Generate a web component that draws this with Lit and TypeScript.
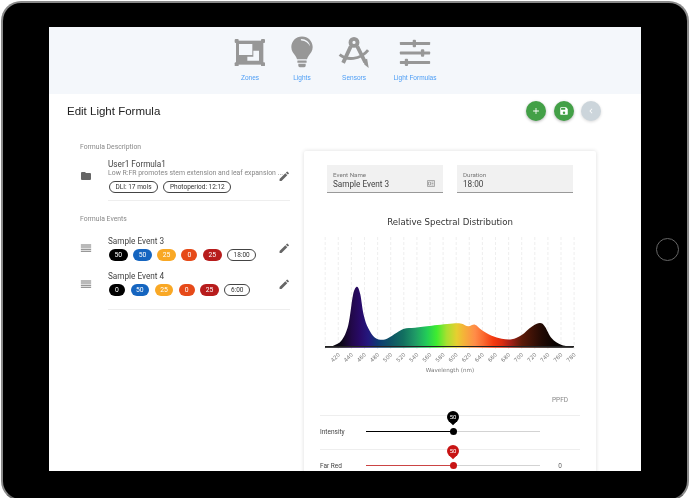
import { LitElement, html, css, svg } from "lit";
import { customElement } from "lit/decorators.js";

const PTS: [number, number][] = [
  [30,336],[55,332],[80,316],[100,270],[114,180],[126,155],[136,178],[146,240],[160,280],[180,308],[205,314],[225,306],[265,282],[300,278],[350,272],[420,265],[440,266],[460,274],[480,269],[500,285],[530,302],[560,311],[590,313],[620,300],[650,275],[675,264],[690,275],[710,310],[740,330],[776,336]
];
const px = (z: number) => 315 + z / 3;
const py = (z: number) => 235 + z / 3;
function areaPath(): string {
  const p = PTS.map(([x, y]) => [px(x), py(y)]);
  let d = `M${p[0][0]} ${py(338)} L${p[0][0]} ${p[0][1]}`;
  for (let i = 0; i < p.length - 1; i++) {
    const a = p[Math.max(0, i - 1)], b = p[i], c = p[i + 1], e = p[Math.min(p.length - 1, i + 2)];
    const c1 = [b[0] + (c[0] - a[0]) / 6, b[1] + (c[1] - a[1]) / 6];
    const c2 = [c[0] - (e[0] - b[0]) / 6, c[1] - (e[1] - b[1]) / 6];
    d += ` C${c1[0].toFixed(1)} ${c1[1].toFixed(1)} ${c2[0].toFixed(1)} ${c2[1].toFixed(1)} ${c[0].toFixed(1)} ${c[1].toFixed(1)}`;
  }
  return d + ` L${p[p.length - 1][0]} ${py(338)} Z`;
}
const STOPS: [number, string][] = [
  [30,"#000"],[80,"#0c0618"],[110,"#22084a"],[135,"#280a68"],[160,"#24187e"],[190,"#0d3a72"],[225,"#0e5266"],[265,"#127060"],[300,"#1f9a66"],[335,"#22cc58"],[365,"#3fec30"],[395,"#a8e030"],[425,"#e6cf30"],[445,"#f4b438"],[480,"#ff8c48"],[505,"#fb6a30"],[535,"#f43a10"],[560,"#dd2c10"],[585,"#a82018"],[620,"#5c1a08"],[680,"#220a04"],[720,"#0a0301"],[776,"#000"]
];

const pencil = html`<svg class="pen" viewBox="0 0 24 24"><path d="M3 17.25V21h3.75L17.81 9.94l-3.75-3.75L3 17.25zM20.71 7.04a1 1 0 0 0 0-1.41l-2.34-2.34a1 1 0 0 0-1.41 0l-1.83 1.83 3.75 3.75 1.83-1.83z"/></svg>`;
const bars = html`<svg class="lead" viewBox="0 0 14 14"><path d="M1 2.800h12v1.200H1zM1 5.300h12v1.200H1zM1 7.800h12v1.200H1zM1 10.300h12v1.200H1z"/></svg>`;

interface Chip { t: string; c: string }
const BLACK = "#000", BLUE = "#1565c0", ORANGE = "#f9a825", RED = "#e64a19", DARK = "#b71c1c";
const events: { name: string; chips: Chip[]; time: string }[] = [
  { name: "Sample Event 3", time: "18:00", chips: [{t:"50",c:BLACK},{t:"50",c:BLUE},{t:"25",c:ORANGE},{t:"0",c:RED},{t:"25",c:DARK}] },
  { name: "Sample Event 4", time: "6:00", chips: [{t:"0",c:BLACK},{t:"50",c:BLUE},{t:"25",c:ORANGE},{t:"0",c:RED},{t:"25",c:DARK}] },
];

@customElement("app-root")
export class AppRoot extends LitElement {
  static styles = css`
    :host { display: block; width: 690px; height: 498px; background: #fff; overflow: hidden; font-family: Roboto, "Liberation Sans", sans-serif; }
    .tablet { position: relative; box-sizing: border-box; width: 688px; height: 500px; margin: 1px 1px 0; background: #000; border: 2px solid #8a8a8a; border-bottom-color: #6a6a6a; border-radius: 20px; padding: 24px 46px 27px; filter: blur(.3px); }
    .home { position: absolute; left: 652.500px; top: 235px; width: 23px; height: 23px; box-sizing: border-box; border: 1px solid #666; border-radius: 50%; }
    .screen { width: 592px; height: 444px; background: #fff; overflow: hidden; display: flex; flex-direction: column; }
    .nav { flex: none; height: 67px; background: #f4f7fb; display: flex; padding-left: 175px; box-sizing: border-box; }
    .nav-item { display: flex; flex-direction: column; align-items: center; justify-content: flex-end; padding-bottom: 12px; box-sizing: border-box; height: 67px; }
    .ico { height: 32px; display: flex; align-items: center; margin-bottom: 6px; }
    .ico svg { display: block; }
    .nav-item span { font: 6.500px/8px "Liberation Sans", Arial, sans-serif; color: #4c9df5; white-space: nowrap; }
    .titlebar { flex: none; height: 34px; display: flex; align-items: center; padding: 0 40px 0 18px; }
    h1 { flex: 1; margin: 0; font: 400 11.500px/16px "Liberation Sans", Arial, sans-serif; color: #222; }
    .fabs { display: flex; gap: 7.500px; }
    .fab { width: 20px; height: 20px; border-radius: 50%; background: #43a047; display: flex; align-items: center; justify-content: center; box-shadow: 0 1px 3px rgba(0,0,0,.3); color: #fff; }
    .fab.off { background: #ccd5db; box-shadow: 0 1px 3px rgba(0,0,0,.15); }
    .fab svg { width: 10px; height: 10px; fill: #fff; }
    .body { flex: 1; display: flex; align-items: flex-start; padding-left: 31px; min-height: 0; }
    .left { width: 210px; flex: none; padding-top: 13.500px; color: #444; }
    .sec { font-size: 6.800px; line-height: 10px; color: #888; white-space: nowrap; }
    .row { display: flex; align-items: center; }
    .lead { flex: none; width: 12px; height: 12px; margin: 0 16px 0 0; fill: #777; }
    .lead.folder { fill: #666; }
    .main { flex: 1; min-width: 0; }
    .name { font-size: 8.200px; line-height: 10px; color: #444; white-space: nowrap; }
    .desc { font-size: 6.900px; line-height: 9px; color: #888; white-space: nowrap; }
    .chips { display: flex; gap: 5.500px; margin: 3px 0 0 1px; }
    .chip { box-sizing: border-box; height: 12px; border-radius: 6px; padding: 0 5.500px; font-size: 6.800px; line-height: 12px; color: #fff; min-width: 16px; text-align: center; white-space: nowrap; }
    .chip.line { background: #fff; color: #333; border: 1px solid #444; line-height: 10px; padding: 0 5.500px; font-size: 6.500px; }
    .pen { flex: none; width: 12.500px; height: 12.500px; fill: #666; margin: 0 0 0 auto; }
    .desc-row { height: 47.500px; margin-top: 1px; }
    .rule { height: 1px; background: #eee; margin-left: 28px; }
    .sec.events { margin-top: 13px; }
    .ev { height: 35.500px; }
    .ev.first { margin-top: 6.500px; }
    .rule.end { margin-top: 7px; }
    .card { width: 292px; flex: none; margin-left: 14px; margin-top: 23px; padding-top: 14px; background: #fff; box-shadow: 0 0 4px rgba(0,0,0,.14); border-radius: 2px; height: 400px; box-sizing: border-box; }
    .fields { display: flex; gap: 14px; padding-left: 23px; }
    .field { box-sizing: border-box; width: 116px; height: 28px; background: #f1f1f1; border-bottom: 1px solid #999; padding: 6px 6px 0; position: relative; }
    .field label { display: block; font-size: 6.200px; line-height: 8px; color: #777; }
    .field div { font-size: 8.200px; line-height: 11px; color: #444; }
    .field svg { position: absolute; right: 8px; top: 15px; width: 8px; height: 7px; }
    .ctitle { margin-top: 22px; text-align: center; font: 8.600px/14px "DejaVu Sans", sans-serif; color: #333; }
    .chart { display: block; margin: 8px 0 0 16px; }
    .ppfd { height: 38px; margin: 0 16px; display: grid; grid-template-columns: 46px 174px 40px; align-items: end; padding-bottom: 10px; box-sizing: border-box; font-size: 6.500px; line-height: 9px; color: #888; }
    .ppfd span { grid-column: 3; text-align: center; }
    .srow { height: 34px; margin: 0 16px; border-top: 1px solid #eee; box-sizing: border-box; display: grid; grid-template-columns: 46px 174px 40px; align-items: center; font-size: 6.500px; color: #444; padding-bottom: 2px; }
    .val { text-align: center; color: #666; }
    .track { position: relative; height: 1.500px; background: #d3d3d3; --c: #000; }
    .track i { display: block; height: 100%; width: 50%; background: var(--c); opacity: var(--o, 1); }
    .thumb { position: absolute; left: 50%; top: 50%; width: 7px; height: 7px; margin: -3.500px 0 0 -3.500px; border-radius: 50%; background: var(--c); }
    .pin { position: absolute; left: 50%; top: -20px; width: 12px; height: 12px; margin-left: -6px; border-radius: 50%; background: var(--c); color: #fff; font-size: 6px; line-height: 12px; text-align: center; }
    .pin::before { content: ""; position: absolute; left: 3px; top: 6.800px; width: 6px; height: 6px; background: var(--c); transform: rotate(45deg); }
    .pin b { font-weight: 400; position: relative; }
    .red { --c: #c81414; --o: .75; }
    text { font-family: "DejaVu Sans", sans-serif; }
  `;

  chart() {
    const grid = Array.from({ length: 20 }, (_, i) => 325.2 + i * 13.1);
    const labels = grid.slice(1).map((x, i) => ({ x, t: String(420 + i * 20) }));
    return html`<svg class="chart" width="260" height="140" viewBox="320 237 260 140">
      <defs><linearGradient id="spec" gradientUnits="userSpaceOnUse" x1="${px(30)}" x2="${px(776)}" y1="0" y2="0">
        ${STOPS.map(([z, c]) => svg`<stop offset="${(z - 30) / 746}" stop-color="${c}"/>`)}
      </linearGradient></defs>
      ${grid.map((x) => svg`<line x1="${x}" x2="${x}" y1="237" y2="349" stroke="#e8e8e8" stroke-width=".7" stroke-dasharray="3 2"/>`)}
      <path d="${areaPath()}" fill="url(#spec)"/>
      <rect x="325" y="346" width="249" height="1" fill="#222"/>
      ${labels.map((l) => svg`<text x="${l.x + 1}" y="354" font-size="5.500" fill="#777" text-anchor="end" dominant-baseline="middle" transform="rotate(-45 ${l.x + 1} 354)">${l.t}</text>`)}
      <text x="450" y="372" font-size="5.600" fill="#777" text-anchor="middle">Wavelength (nm)</text>
    </svg>`;
  }

  slider(label: string, val: string, cls: string) {
    return html`<div class="srow"><span>${label}</span>
      <div class="track ${cls}"><i></i><div class="thumb"></div><div class="pin"><b>50</b></div></div>
      <span class="val">${val}</span></div>`;
  }

  render() {
    return html`<div class="tablet">
      <div class="home"></div>
      <div class="screen">
        <div class="nav">
          <div class="nav-item" style="width:52px">
            <div class="ico"><svg width="32" height="28" viewBox="0 0 96 84">
              <g fill="#979797">
                <rect x="6" y="8" width="82" height="72"/>
                <rect x="2" y="3" width="12" height="12" rx="3"/><rect x="81" y="3" width="12" height="12" rx="3"/>
                <rect x="2" y="73" width="12" height="12" rx="3"/><rect x="81" y="73" width="12" height="12" rx="3"/>
              </g>
              <rect x="15" y="18" width="40" height="33" fill="#f4f7fb"/>
              <path fill="#f4f7fb" d="M58 38h17v30H40V56h18z"/>
            </svg></div>
            <span>Zones</span>
          </div>
          <div class="nav-item" style="width:52px">
            <div class="ico"><svg width="22" height="32" viewBox="0 0 69 100">
              <path fill="#979797" d="M34.500 1C15.500 1 1 16 1 34c0 12 7 20 12 27 3 4 5 8 6 12h31c1-4 3-8 6-12 5-7 12-15 12-27C68 16 53.500 1 34.500 1z"/>
              <path fill="#f4f7fb" d="M33 9c13 0 25 9 27 23-6-10-15-17-27-18-3-1-3-5 0-5z"/>
              <rect x="20" y="77" width="29" height="7" rx="1" fill="#979797"/>
              <path fill="#979797" d="M23 87h23v5a6 6 0 0 1-6 6H29a6 6 0 0 1-6-6z"/>
            </svg></div>
            <span>Lights</span>
          </div>
          <div class="nav-item" style="width:52px">
            <div class="ico"><svg width="32" height="32" viewBox="0 0 96 100">
              <g fill="none" stroke="#979797" stroke-width="12">
                <circle cx="48" cy="20" r="11"/>
                <path d="M38 32L14 84M58 32l25 50"/>
                <path d="M3 58C25 76 66 76 92 44" stroke-width="9"/>
              </g>
              <path fill="#979797" d="M76 76l13-5 5 29-13-10z"/>
            </svg></div>
            <span>Sensors</span>
          </div>
          <div class="nav-item" style="width:70px">
            <div class="ico"><svg width="32" height="27" viewBox="0 0 96 82">
              <g fill="#979797">
                <rect x="2" y="9" width="92" height="9" rx="2"/><rect x="41" y="2" width="10" height="23" rx="3"/>
                <rect x="2" y="38" width="92" height="9" rx="2"/><rect x="66" y="31" width="10" height="23" rx="3"/>
                <rect x="2" y="67" width="92" height="9" rx="2"/><rect x="17" y="60" width="10" height="22" rx="3"/>
              </g>
            </svg></div>
            <span>Light Formulas</span>
          </div>
        </div>
        <div class="titlebar">
          <h1>Edit Light Formula</h1>
          <div class="fabs">
            <div class="fab"><svg viewBox="0 0 24 24"><path d="M19 13h-6v6h-2v-6H5v-2h6V5h2v6h6z"/></svg></div>
            <div class="fab"><svg viewBox="0 0 24 24"><path d="M17 3H5a2 2 0 0 0-2 2v14a2 2 0 0 0 2 2h14a2 2 0 0 0 2-2V7l-4-4zm-5 16a3 3 0 1 1 0-6 3 3 0 0 1 0 6zm3-10H5V5h10v4z"/></svg></div>
            <div class="fab off"><svg viewBox="0 0 24 24"><path d="M15.400 7.400L14 6l-6 6 6 6 1.400-1.400L10.800 12z"/></svg></div>
          </div>
        </div>
        <div class="body">
          <div class="left">
            <div class="sec">Formula Description</div>
            <div class="row desc-row">
              <svg class="lead folder" viewBox="0 0 24 24"><path d="M10 4H4a2 2 0 0 0-2 2v12a2 2 0 0 0 2 2h16a2 2 0 0 0 2-2V8a2 2 0 0 0-2-2h-8z"/></svg>
              <div class="main">
                <div class="name">User1 Formula1</div>
                <div class="desc">Low R:FR promotes stem extension and leaf expansion ...</div>
                <div class="chips"><div class="chip line">DLI: 17 mols</div><div class="chip line">Photoperiod: 12:12</div></div>
              </div>
              ${pencil}
            </div>
            <div class="rule"></div>
            <div class="sec events">Formula Events</div>
            ${events.map((e, i) => html`<div class="row ev ${i === 0 ? "first" : ""}">
              ${bars}
              <div class="main">
                <div class="name">${e.name}</div>
                <div class="chips">
                  ${e.chips.map((c) => html`<div class="chip" style="background:${c.c}">${c.t}</div>`)}
                  <div class="chip line">${e.time}</div>
                </div>
              </div>
              ${pencil}
            </div>`)}
            <div class="rule end"></div>
          </div>
          <div class="card">
            <div class="fields">
              <div class="field"><label>Event Name</label><div>Sample Event 3</div>
                <svg viewBox="0 0 8 7"><path fill="none" stroke="#999" stroke-width=".8" d="M.5.500h7v6h-7zM4.500 2h2M4.500 3.500h2M4.500 5h2M1.500 2h2v3h-2z"/></svg>
              </div>
              <div class="field"><label>Duration</label><div>18:00</div></div>
            </div>
            <div class="ctitle">Relative Spectral Distribution</div>
            ${this.chart()}
            <div class="ppfd"><span>PPFD</span></div>
            ${this.slider("Intensity", "", "")}
            ${this.slider("Far Red", "0", "red")}
          </div>
        </div>
      </div>
    </div>`;
  }
}
